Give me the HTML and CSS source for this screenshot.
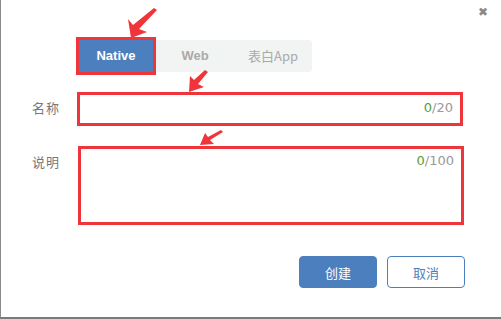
FILE: index.html
```html
<!DOCTYPE html>
<html lang="zh">
<head>
  <meta charset="UTF-8">
  <title>新建应用</title>
  <link rel="stylesheet" href="styles.css">
</head>
<body>
<div class="dialog">
  <span class="close">✖</span>

  <div class="tabs">
    <div class="tab tab-active">Native</div>
    <div class="tab">Web</div>
    <div class="tab">表白App</div>
  </div>

  <div class="row">
    <label class="label">名称</label>
    <div class="field field-name">
      <span class="count"><em>0</em>/20</span>
    </div>
  </div>

  <div class="row row-desc">
    <label class="label">说明</label>
    <div class="field field-desc">
      <span class="count"><em>0</em>/100</span>
    </div>
  </div>

  <div class="actions">
    <button class="btn btn-primary">创建</button>
    <button class="btn btn-ghost">取消</button>
  </div>

  <!-- annotation arrows -->
  <svg class="arrows" width="501" height="319" viewBox="0 0 501 319">
    <g fill="#f0353a">
      <polygon points="157,10 154,8 133,25 128,19 131,38 147,32 139,29"/>
      <polygon points="208,72 205,70 194,80 190,76 189,92 204,87 198,84"/>
      <polygon points="223,132 221,130 208,137 205,133 200,145 214,144 210,140"/>
    </g>
  </svg>
</div>
</body>
</html>
```

FILE: styles.css
```css
* { box-sizing: border-box; margin: 0; padding: 0; }
body {
  font-family: "Liberation Sans", Arial, "Noto Sans CJK SC", sans-serif;
  background: #fff;
}
.dialog {
  position: relative;
  width: 501px;
  height: 319px;
  border-left: 1px solid #8a8a8a;
  border-bottom: 2px solid #7a7a7a;
  padding: 37px 0 0 75px;
}
.close {
  position: absolute;
  top: 5px;
  right: 13px;
  font-size: 12px;
  color: #888;
}
.tabs {
  display: flex;
  align-items: center;
  width: 236px;
  height: 38px;
}
.tab {
  width: 78px;
  height: 32px;
  line-height: 32px;
  text-align: center;
  font-size: 13px;
  font-weight: bold;
  color: #aaa;
  background: #f2f3f3;
}
.tab:last-child {
  font-weight: normal;
  font-family: "Noto Sans CJK SC", sans-serif;
  border-radius: 0 4px 4px 0;
}
.tab-active {
  width: 80px;
  height: 38px;
  line-height: 32px;
  color: #fff;
  background: #4c7fbd;
  border: 3px solid #f0353a;
}
.row {
  display: flex;
  margin-top: 17px;
  margin-left: -44px;
}
.row-desc { margin-top: 20px; }
.label {
  width: 45px;
  padding-top: 6px;
  font-family: "Noto Sans CJK SC", sans-serif;
  font-size: 13px;
  color: #777;
  letter-spacing: 1px;
}
.field {
  position: relative;
  width: 386px;
  border: 3px solid #f0353a;
  display: flex;
  justify-content: flex-end;
  padding: 5px 7px 0 0;
}
.field-name { height: 34px; }
.field-desc { height: 79px; margin-left: 1px; padding-top: 4px; }
.count {
  font-family: "DejaVu Sans", Verdana, sans-serif;
  font-size: 13px;
  color: #999;
}
.count em {
  font-style: normal;
  color: #5a9e2f;
}
.actions {
  display: flex;
  gap: 10px;
  margin: 31px 0 0 223px;
}
.btn {
  width: 78px;
  height: 32px;
  border-radius: 4px;
  font-family: "Noto Sans CJK SC", sans-serif;
  font-size: 13px;
  cursor: pointer;
}
.btn-primary {
  background: #4c7fbd;
  border: 1px solid #4c7fbd;
  color: #fff;
}
.btn-ghost {
  background: #fff;
  border: 1px solid #4c7fbd;
  color: #4c7fbd;
}
.arrows {
  position: absolute;
  left: -1px;
  top: 0;
  pointer-events: none;
}
```
